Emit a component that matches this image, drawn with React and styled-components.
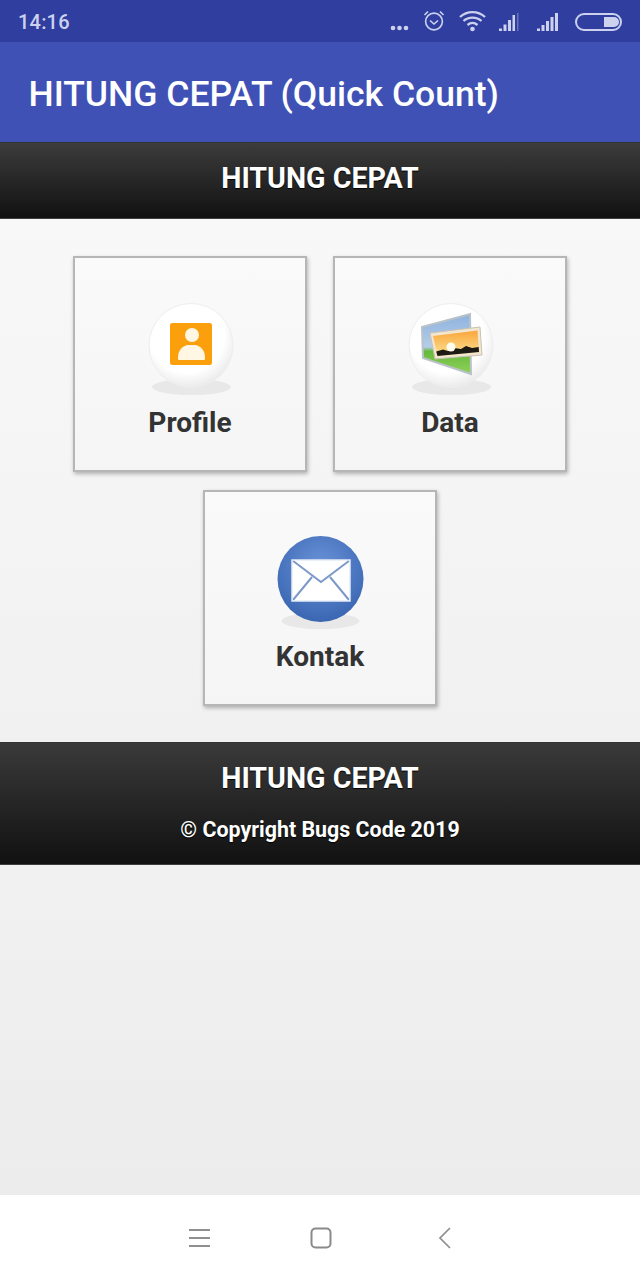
import React from "react";
import styled, { createGlobalStyle } from "styled-components";

const Global = createGlobalStyle`
  html, body { margin: 0; padding: 0; background: #eee; }
  * { box-sizing: border-box; }
`;
const Page = styled.div`
  width: 640px; height: 1280px; display: flex; flex-direction: column;
  font-family: Roboto, "Liberation Sans", sans-serif; overflow: hidden;
`;
const StatusBar = styled.div`
  height: 42px; flex: none; background: #303f9f; color: #ccd2ee;
  display: flex; align-items: center; justify-content: space-between;
  padding: 0 18px;
`;
const Time = styled.span`font-size: 20px; font-weight: 500; letter-spacing: .2px; margin-top: 1px;`;
const StatusIcons = styled.svg`display: block; margin-top: 1px;`;
const AppBar = styled.div`
  height: 100px; flex: none; background: #3f51b5; color: #fff;
  display: flex; align-items: center; padding: 4px 0 0 28.500px;
`;
const AppTitle = styled.h1`margin: 0; font-size: 35.500px; font-weight: 500; white-space: nowrap;`;
const Band = styled.div`
  flex: none; background: linear-gradient(#3a3a3a, #111);
  border-top: 1px solid #333; border-bottom: 1px solid #3f3f3f; color: #fff;
  text-align: center; text-shadow: 0 1px 1px #000; font-weight: 700;
`;
const HeaderBand = styled(Band)`
  height: 77px; background: linear-gradient(#3c3c3c, #111);
  display: flex; align-items: center; justify-content: center; padding-bottom: 5px;
`;
const BandTitle = styled.div`font-size: 28.600px; line-height: 30px; font-weight: 700;`;
const Content = styled.div`
  flex: none; height: 523px; background: linear-gradient(#f8f8f8, #f1f1f1);
  padding: 37px 73px 0; display: flex; flex-wrap: wrap; justify-content: center;
  align-content: flex-start; column-gap: 26px; row-gap: 18px;
`;
const Card = styled.div`
  width: 234px; height: 216px; border: 2px solid #b6b6b6;
  background: linear-gradient(#fafafa, #f5f5f5);
  box-shadow: 1px 2px 4px rgba(0,0,0,.28);
  display: flex; flex-direction: column; align-items: center; padding-top: 44px;
`;
const IconBox = styled.svg`display: block; width: 92px; height: 95px; flex: none;`;
const CardLabel = styled.div`
  font-size: 28px; font-weight: 700; color: #333; line-height: 32px; margin-top: 10px;
`;
const FooterBand = styled(Band)`height: 123px; padding-top: 20px;`;
const Copyright = styled.div`font-size: 21.400px; line-height: 26px; margin-top: 24px;`;
const Filler = styled.div`flex: 1; background: linear-gradient(#f1f1f1, #ececec);`;
const NavBar = styled.div`
  height: 85px; flex: none; background: #fff; display: flex; align-items: center;
  justify-content: center; gap: 100px; padding: 0;
`;
const NavIcon = styled.svg`display: block; margin-left: ${(p) => p.$shift || 0}px;`;

const Shell = ({ id, children }) => (
  <>
    <defs>
      <radialGradient id={id} cx="45%" cy="38%" r="62%">
        <stop offset="72%" stopColor="#ffffff" />
        <stop offset="100%" stopColor="#ebebeb" />
      </radialGradient>
    </defs>
    <ellipse cx="47.500" cy="85" rx="39.500" ry="8" fill="#e8e8e8" />
    <circle cx="47" cy="43.500" r="42" fill={`url(#${id})`} stroke="#eeeeee" />
    {children}
  </>
);

const ProfileIcon = () => (
  <IconBox viewBox="0 0 92 95">
    <Shell id="shellP">
      <rect x="26" y="21" width="42" height="42" rx="2.500" fill="#fb9f0c" />
      <circle cx="48" cy="33" r="7" fill="#fff6e4" />
      <path d="M34 57c0-6 1-11 9-14h9c8 3 9 8 9 14 0 1-1 1-2 1H36c-1 0-2 0-2-1z" fill="#fff6e4" />
    </Shell>
  </IconBox>
);

const DataIcon = () => (
  <IconBox viewBox="0 0 92 95">
    <defs>
      <linearGradient id="sky" x1="0" y1="0" x2="0" y2="1">
        <stop offset="0" stopColor="#f9a63c" />
        <stop offset="1" stopColor="#fde394" />
      </linearGradient>
      <linearGradient id="backP" x1="0" y1="0" x2="0" y2="1">
        <stop offset="0" stopColor="#8fb2de" />
        <stop offset=".55" stopColor="#b4cde8" />
        <stop offset=".62" stopColor="#66b93c" />
        <stop offset="1" stopColor="#90d258" />
      </linearGradient>
    </defs>
    <Shell id="shellD">
      <path d="M18 25 66 12 67 72 19 56z" fill="url(#backP)" stroke="#b9c2c8" strokeWidth="2" />
      <path d="M26 31 76 25 78 53 31 57z" fill="#f3e6cf" stroke="#c9c2b4" />
      <path d="M29 34 73.500 28.500 75 50 33.500 54z" fill="url(#sky)" />
      <path d="M33.500 54 32.200 49.500 39 47.500 44 49 50 46 57 47 62 44 68 46 74.700 45 75 50z" fill="#1e1a14" />
      <circle cx="47" cy="45" r="4.500" fill="#fffdf0" />
    </Shell>
  </IconBox>
);

const KontakIcon = () => (
  <IconBox viewBox="0 0 92 95">
    <defs>
      <radialGradient id="blue" cx="50%" cy="35%" r="65%">
        <stop offset="0" stopColor="#6a93d8" />
        <stop offset="1" stopColor="#3a66b2" />
      </radialGradient>
    </defs>
    <ellipse cx="46.500" cy="85" rx="39" ry="8" fill="#e8e8e8" />
    <circle cx="46.500" cy="43" r="43" fill="url(#blue)" />
    <rect x="18" y="24" width="58" height="41" fill="#fff" />
    <path d="M18.500 24.500 47 46 75.500 24.500M19 64 38 41M75 64 56 41" fill="none" stroke="#7d99c9" strokeWidth="2" />
    <rect x="18" y="24" width="58" height="41" fill="none" stroke="#e6ecf6" strokeWidth="1.500" />
  </IconBox>
);

export default function App() {
  return (
    <Page>
      <Global />
      <StatusBar>
        <Time>14:16</Time>
        <StatusIcons width="232" height="26" viewBox="0 0 232 26" fill="#ccd2ee" stroke="none">
          <circle cx="3" cy="19" r="2.300" />
          <circle cx="9.500" cy="19" r="2.300" />
          <circle cx="16" cy="19" r="2.300" />
          <g fill="none" stroke="#ccd2ee" strokeWidth="1.600">
            <circle cx="44" cy="12.500" r="8.400" />
            <path d="M40 11.500 44 15 48 11.500" />
            <path d="M34.500 6 38 2.500M53.500 6 50 2.500" />
            <path d="M70 8c7-6.500 18-6.500 25 0M73.500 12c5-4.500 13-4.500 18 0M77.500 16c3-2.500 7-2.500 10 0" strokeWidth="2.300" />
          </g>
          <circle cx="82.500" cy="20" r="2.300" />
          <path d="M109 19.500h3V22h-3zM113.500 15.500h3V22h-3zM118 11h3v11h-3zM122.500 6h2.500v16h-2.500z" />
          <rect x="127" y="4" width="1.500" height="18" opacity=".35" />
          <path d="M147 19.500h3V22h-3zM151.500 16h3v6h-3zM156 12h3v10h-3zM160.500 8h3v14h-3zM165 4h3v18h-3z" />
          <rect x="186" y="5" width="45" height="16" rx="8" fill="none" stroke="#ccd2ee" strokeWidth="2" />
          <path d="M214 8h10a5 5 0 0 1 0 10h-10z" />
        </StatusIcons>
      </StatusBar>
      <AppBar>
        <AppTitle>HITUNG CEPAT (Quick Count)</AppTitle>
      </AppBar>
      <HeaderBand>
        <BandTitle>HITUNG CEPAT</BandTitle>
      </HeaderBand>
      <Content>
        <Card>
          <ProfileIcon />
          <CardLabel>Profile</CardLabel>
        </Card>
        <Card>
          <DataIcon />
          <CardLabel>Data</CardLabel>
        </Card>
        <Card>
          <KontakIcon />
          <CardLabel>Kontak</CardLabel>
        </Card>
      </Content>
      <FooterBand>
        <BandTitle>HITUNG CEPAT</BandTitle>
        <Copyright>© Copyright Bugs Code 2019</Copyright>
      </FooterBand>
      <Filler />
      <NavBar>
        <NavIcon width="21" height="20" viewBox="0 0 21 20" fill="none" stroke="#8f8f8f" strokeWidth="2">
          <path d="M0 2h21M0 10h21M0 18h21" />
        </NavIcon>
        <NavIcon width="22" height="22" viewBox="0 0 22 22" fill="none" stroke="#8a8a8a" strokeWidth="2">
          <rect x="1.500" y="1.500" width="19" height="19" rx="4" />
        </NavIcon>
        <NavIcon $shift={6} width="13" height="22" viewBox="0 0 13 22" fill="none" stroke="#8f8f8f" strokeWidth="1.700">
          <path d="M12 1 2 11l10 10" />
        </NavIcon>
      </NavBar>
    </Page>
  );
}
